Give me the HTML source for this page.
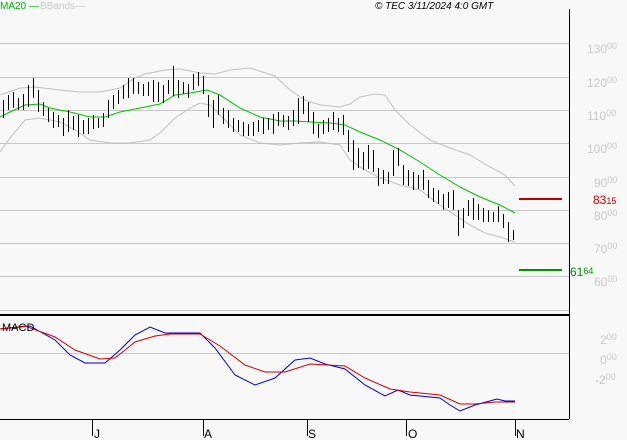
<!DOCTYPE html>
<html><head><meta charset="utf-8"><style>
body{margin:0;width:627px;height:440px;background:#f8f8f8;overflow:hidden;font-family:"Liberation Sans",sans-serif}
svg{position:absolute;left:0;top:0}
</style></head><body>
<svg width="627" height="440" xmlns="http://www.w3.org/2000/svg" font-family="Liberation Sans, sans-serif">
<rect width="627" height="440" fill="#f8f8f8"/>
<g stroke="#c8c8c8" stroke-width="1">
<line x1="0" y1="43.5" x2="569" y2="43.5"/><line x1="0" y1="77.5" x2="569" y2="77.5"/>
<line x1="0" y1="110.5" x2="569" y2="110.5"/><line x1="0" y1="143.5" x2="569" y2="143.5"/>
<line x1="0" y1="177.5" x2="569" y2="177.5"/><line x1="0" y1="210.5" x2="569" y2="210.5"/>
<line x1="0" y1="243.5" x2="569" y2="243.5"/><line x1="0" y1="276.5" x2="569" y2="276.5"/>
<line x1="0" y1="310.5" x2="569" y2="310.5"/><line x1="0" y1="353.5" x2="569" y2="353.5"/>
</g>
<line x1="569.5" y1="9" x2="569.5" y2="419" stroke="#000"/>
<line x1="0" y1="315" x2="569" y2="315" stroke="#000" stroke-width="2"/>
<line x1="0" y1="419.5" x2="569" y2="419.5" stroke="#000"/>
<g stroke="#000"><line x1="92.5" y1="420" x2="92.5" y2="436"/><line x1="203.5" y1="420" x2="203.5" y2="436"/><line x1="307.5" y1="420" x2="307.5" y2="436"/><line x1="406.5" y1="420" x2="406.5" y2="436"/><line x1="515.5" y1="420" x2="515.5" y2="436"/></g>
<g font-size="12" fill="#000"><text x="94" y="438">J</text><text x="204" y="438">A</text><text x="308" y="438">S</text><text x="408" y="438">O</text><text x="516" y="438">N</text></g>
<polyline fill="none" stroke="#c0c0c0" points="0,152 10,138 25,120 40,118 60,122 75,130 90,140 110,143 130,143 150,140 160,133 175,118 190,108 200,103 210,105 225,120 240,135 260,143 280,145 300,143 320,142 340,145 350,160 365,170 380,178 400,185 420,190 440,205 455,215 470,225 485,233 500,237 515,242"/>
<polyline fill="none" stroke="#c0c0c0" points="0,95 20,88 35,87 60,90 80,92 100,92 120,88 135,78 145,74 165,70 180,69 200,73 215,74 230,70 250,68 275,76 290,90 305,100 320,105 340,107 350,104 360,97 375,94 385,95 395,110 410,125 430,140 450,148 470,155 490,167 505,175 515,186"/>
<polyline fill="none" stroke="#00c000" points="0,117 10,112 25,105 40,104 50,108 70,112 90,117 105,117 120,112 140,108 160,104 175,95 190,93 207,90 220,95 240,108 260,117 280,121 295,121 310,122 330,123 345,125 360,132 380,140 400,150 420,162 440,175 460,187 480,197 500,205 515,213"/>
<path stroke="#000" stroke-width="1" fill="none" d="M3.5,100v18M8.5,95v15M13.5,92v16M18.5,98v12M23.5,94v16M28.5,85v22M33.5,78v20M38.5,90v22M43.5,102v14M48.5,108v14M53.5,112v16M58.5,115v12M63.5,118v18M68.5,110v22M73.5,116v14M78.5,115v22M83.5,120v14M88.5,118v16M93.5,115v14M98.5,118v10M103.5,113v14M108.5,100v18M113.5,95v14M118.5,90v14M123.5,85v14M128.5,78v20M133.5,78v16M138.5,82v12M143.5,84v12M148.5,82v14M153.5,80v22M158.5,82v20M163.5,85v18M168.5,80v14M173.5,66v30M178.5,80v18M183.5,82v12M188.5,84v14M193.5,74v16M198.5,72v14M203.5,76v18M208.5,95v22M213.5,100v28M218.5,95v20M223.5,108v16M228.5,110v18M233.5,118v14M238.5,120v12M243.5,122v14M248.5,124v12M253.5,122v14M258.5,120v12M263.5,118v16M268.5,118v12M273.5,114v20M278.5,112v14M283.5,115v12M288.5,116v14M293.5,110v16M298.5,98v26M303.5,96v18M308.5,102v20M313.5,112v22M318.5,124v14M323.5,120v14M328.5,118v14M333.5,112v18M338.5,118v14M343.5,115v20M348.5,130v22M353.5,140v30M358.5,148v20M363.5,152v18M368.5,145v24M373.5,150v22M378.5,168v18M383.5,170v14M388.5,172v12M393.5,150v26M398.5,148v18M403.5,165v20M408.5,170v16M413.5,172v18M418.5,175v14M423.5,170v20M428.5,180v18M433.5,188v14M438.5,190v14M443.5,194v16M448.5,192v16M453.5,190v20M458.5,210v26M463.5,208v20M468.5,200v16M473.5,198v22M478.5,204v16M483.5,208v14M488.5,210v12M493.5,212v10M498.5,206v16M503.5,214v14M508.5,222v20M513.5,230v10"/>
<line x1="519" y1="199" x2="562" y2="199" stroke="#c00000" stroke-width="2"/>
<line x1="519" y1="270" x2="562" y2="270" stroke="#009000" stroke-width="2"/>
<polyline fill="none" stroke="#0000d0" points="0,329 30,326 55,340 70,355 85,363 105,363 120,350 135,335 150,327 165,333 200,333 215,348 235,375 255,385 275,378 295,360 310,358 325,364 345,369 365,385 385,396 398,390 410,395 440,398 450,405 460,411 475,405 497,399 505,401 515,401"/>
<polyline fill="none" stroke="#d00000" points="0,329 25,326 55,337 75,350 100,359 115,358 135,342 155,336 170,334 200,334 220,346 245,365 265,372 285,372 310,364 345,366 365,378 390,389 410,392 440,395 460,404 475,404 495,402 515,402"/>
<text x="2" y="331" font-size="11" fill="#000">MACD</text>
<g font-size="12" fill="#c8c8c8">
<text x="587" y="53">130<tspan font-size="9" dy="-4">00</tspan></text>
<text x="587" y="87">120<tspan font-size="9" dy="-4">00</tspan></text>
<text x="587" y="120">110<tspan font-size="9" dy="-4">00</tspan></text>
<text x="587" y="153">100<tspan font-size="9" dy="-4">00</tspan></text>
<text x="594" y="187">90<tspan font-size="9" dy="-4">00</tspan></text>
<text x="594" y="220">80<tspan font-size="9" dy="-4">00</tspan></text>
<text x="594" y="253">70<tspan font-size="9" dy="-4">00</tspan></text>
<text x="594" y="286">60<tspan font-size="9" dy="-4">00</tspan></text>
<text x="600" y="344">2<tspan font-size="9" dy="-4">00</tspan></text>
<text x="600" y="364">0<tspan font-size="9" dy="-4">00</tspan></text>
<text x="595" y="384">-2<tspan font-size="9" dy="-4">00</tspan></text>
</g>
<text x="593" y="204" font-size="12" fill="#c00000">83<tspan font-size="9">15</tspan></text>
<text x="570" y="276" font-size="12" fill="#009000">61<tspan font-size="9" dy="-2">64</tspan></text>
<text x="0" y="9" font-size="10" fill="#00b000">MA20 —</text>
<text x="40" y="9" font-size="10" fill="#c8c8c8">BBands—</text>
<text x="375" y="9" font-size="10" font-style="italic" fill="#000">© TEC 3/11/2024 4:0 GMT</text>
</svg>
</body></html>
